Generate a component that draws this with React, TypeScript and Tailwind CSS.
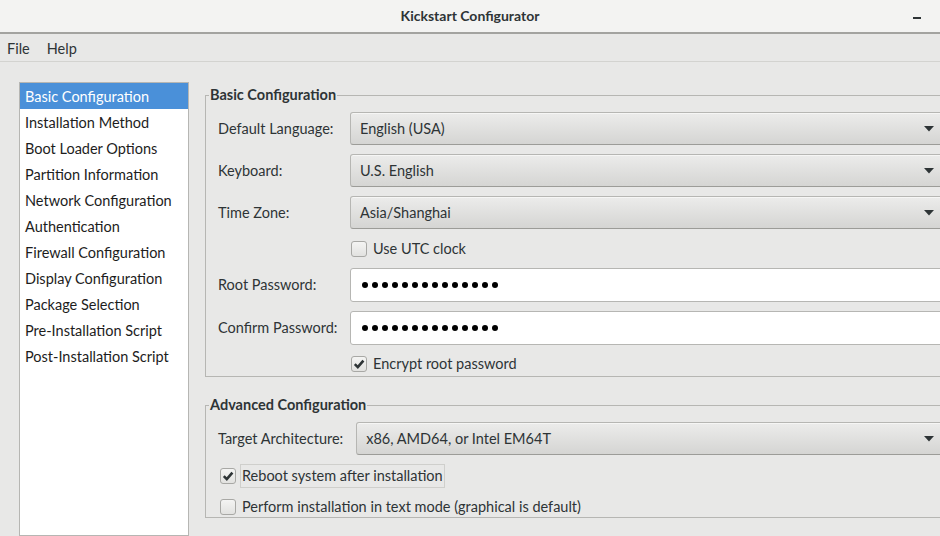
import React from 'react';

const navItems = [
  'Basic Configuration',
  'Installation Method',
  'Boot Loader Options',
  'Partition Information',
  'Network Configuration',
  'Authentication',
  'Firewall Configuration',
  'Display Configuration',
  'Package Selection',
  'Pre-Installation Script',
  'Post-Installation Script',
];

const Arrow: React.FC = () => (
  <svg width="10" height="6" viewBox="0 0 10 6" className="shrink-0">
    <polygon points="0,0 10,0 5,5.5" fill="#2e3436" />
  </svg>
);

const Combo: React.FC<{ value: string }> = ({ value }) => (
  <div className="flex h-[33px] flex-1 items-center justify-between rounded-l-[3px] border border-[#b6b6b3] border-b-[#9c9c98] bg-gradient-to-b from-[#ececeb] to-[#d5d5d3] pl-[9px] pr-[19px] shadow-[inset_0_1px_0_#f6f6f5]">
    <span>{value}</span>
    <Arrow />
  </div>
);

const Dots: React.FC = () => (
  <div className="flex gap-[4px]">
    {Array.from({ length: 14 }).map((_, i) => (
      <span key={i} className="block h-[6px] w-[6px] rounded-full bg-black" />
    ))}
  </div>
);

const PasswordEntry: React.FC = () => (
  <div className="flex h-[34px] flex-1 items-center rounded-l-[3px] border border-[#b6b6b3] bg-white pl-[11px]">
    <Dots />
  </div>
);

const Checkbox: React.FC<{ checked?: boolean }> = ({ checked }) => (
  <span className="flex h-[16px] w-[16px] shrink-0 items-center justify-center rounded-[3px] border border-[#a8a8a5] bg-gradient-to-b from-[#f4f4f3] to-[#e2e2e0]">
    {checked && (
      <svg width="12" height="12" viewBox="0 0 12 12">
        <path d="M1.8 6.2 L4.8 9.2 L10.4 2.6" stroke="#2e3436" strokeWidth="2.6" fill="none" />
      </svg>
    )}
  </span>
);

const App: React.FC = () => {
  return (
    <div
      className="flex h-[536px] w-[940px] flex-col overflow-hidden bg-[#e8e8e7] text-[14.5px] text-[#2e3436]"
      style={{ fontFamily: 'Lato, "Liberation Sans", sans-serif' }}
    >
      {/* title bar */}
      <div className="relative flex h-[34px] shrink-0 items-center justify-center border-b-2 border-[#a3a3a0] bg-[#f3f3f2] pb-[2px]">
        <span className="text-[14px] font-bold text-[#2e3436]">Kickstart Configurator</span>
        <span className="absolute right-[19px] top-[17px] block h-[2px] w-[8px] bg-[#2e3436]" />
      </div>

      {/* menu bar */}
      <div className="flex h-[28px] shrink-0 items-center gap-[17px] border-b border-[#d3d3d0] pl-[7px] pt-[2px]">
        <span>File</span>
        <span>Help</span>
      </div>

      <div className="flex flex-1 pl-[19px] pt-[20px]">
        {/* sidebar */}
        <div className="w-[170px] shrink-0 border border-[#b6b6b3] bg-white">
          {navItems.map((item, i) => (
            <div
              key={item}
              className={`flex h-[26px] items-center pl-[5px] pt-[1px] ${
                i === 0 ? 'bg-[#4a90d9] text-white' : 'text-[#1d1d1d]'
              }`}
            >
              {item}
            </div>
          ))}
        </div>

        {/* main */}
        <div className="ml-[16px] flex w-[760px] shrink-0 flex-col pt-[4px]">
          <fieldset className="border border-[#b6b6b3] pb-[4px] pl-[3px] pr-[10px]">
            <legend className="px-[1px] font-bold leading-[18px]">Basic Configuration</legend>
            <div className="pl-[9px]">
              <div className="mt-[8px] flex flex-col gap-[9px]">
                <div className="flex items-center">
                  <span className="w-[132px] shrink-0">Default Language:</span>
                  <Combo value="English (USA)" />
                </div>
                <div className="flex items-center">
                  <span className="w-[132px] shrink-0">Keyboard:</span>
                  <Combo value="U.S. English" />
                </div>
                <div className="flex items-center">
                  <span className="w-[132px] shrink-0">Time Zone:</span>
                  <Combo value="Asia/Shanghai" />
                </div>
              </div>
              <div className="mt-[12px] flex h-[16px] items-center gap-[6px] pl-[133px]">
                <Checkbox />
                <span>Use UTC clock</span>
              </div>
              <div className="mt-[11px] flex flex-col gap-[9px]">
                <div className="flex items-center">
                  <span className="w-[132px] shrink-0">Root Password:</span>
                  <PasswordEntry />
                </div>
                <div className="flex items-center">
                  <span className="w-[132px] shrink-0">Confirm Password:</span>
                  <PasswordEntry />
                </div>
              </div>
              <div className="mt-[11px] flex h-[16px] items-center gap-[6px] pl-[133px]">
                <Checkbox checked />
                <span>Encrypt root password</span>
              </div>
            </div>
          </fieldset>

          <fieldset className="mt-[19px] border border-[#b6b6b3] pb-[2px] pl-[3px] pr-[10px]">
            <legend className="px-[1px] font-bold leading-[18px]">Advanced Configuration</legend>
            <div className="pl-[9px]">
              <div className="mt-[8px] flex items-center gap-[13px]">
                <span className="shrink-0">Target Architecture:</span>
                <Combo value="x86, AMD64, or Intel EM64T" />
              </div>
              <div className="mt-[9px] flex h-[24px] items-center gap-[4px] pl-[2px]">
                <Checkbox checked />
                <span className="flex h-[24px] items-center border border-[#cfcfcc] px-[1px]">
                  Reboot system after installation
                </span>
              </div>
              <div className="mt-[11px] flex h-[16px] items-center gap-[6px] pl-[2px]">
                <Checkbox />
                <span>Perform installation in text mode (graphical is default)</span>
              </div>
            </div>
          </fieldset>
        </div>
      </div>
    </div>
  );
};

export default App;
